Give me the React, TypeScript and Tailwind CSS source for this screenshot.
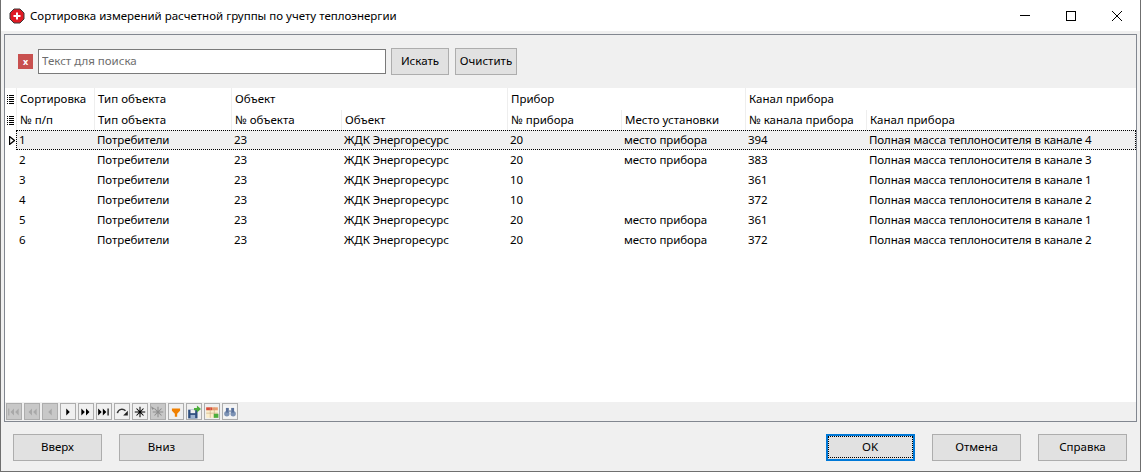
import React from "react";

const cols = [78, 137, 110, 166, 114, 124, 121, 259];
const rows = [
  ["1", "Потребители", "23", "ЖДК Энергоресурс", "20", "место прибора", "394", "Полная масса теплоносителя в канале 4"],
  ["2", "Потребители", "23", "ЖДК Энергоресурс", "20", "место прибора", "383", "Полная масса теплоносителя в канале 3"],
  ["3", "Потребители", "23", "ЖДК Энергоресурс", "10", "", "361", "Полная масса теплоносителя в канале 1"],
  ["4", "Потребители", "23", "ЖДК Энергоресурс", "10", "", "372", "Полная масса теплоносителя в канале 2"],
  ["5", "Потребители", "23", "ЖДК Энергоресурс", "20", "место прибора", "361", "Полная масса теплоносителя в канале 1"],
  ["6", "Потребители", "23", "ЖДК Энергоресурс", "20", "место прибора", "372", "Полная масса теплоносителя в канале 2"],
];
const sub = ["№ п/п", "Тип объекта", "№ объекта", "Объект", "№ прибора", "Место установки", "№ канала прибора", "Канал прибора"];
const groups: [string, number][] = [
  ["Сортировка", 78],
  ["Тип объекта", 137],
  ["Объект", 276],
  ["Прибор", 238],
  ["Канал прибора", 380],
];

function ListIcon() {
  return (
    <svg width="7" height="9" viewBox="0 0 7 9" className="block">
      {[0, 2, 4, 6, 8].map((y) => (
        <g key={y}>
          <rect x="0" y={y} width="1" height="1" fill="#000" />
          <rect x="2" y={y} width="5" height="1" fill="#000" />
        </g>
      ))}
    </svg>
  );
}

function Btn({ children, w, primary }: { children: React.ReactNode; w: string; primary?: boolean }) {
  return (
    <div
      className={`flex h-[27px] items-center justify-center bg-[#e1e1e1] pb-[1px] text-[11.5px] text-black ${w} ${
        primary ? "border-2 border-[#0078d7]" : "border border-[#adadad]"
      }`}
    >
      {primary ? (
        <div className="flex h-full w-full items-center justify-center border border-dotted border-black pr-[1px]">{children}</div>
      ) : (
        children
      )}
    </div>
  );
}

function Nav({ off, children }: { off?: boolean; children: React.ReactNode }) {
  return (
    <div
      className={`flex h-[17px] w-[16px] items-center justify-center border border-[#adadad] ${
        off ? "bg-[#c8c8c8]" : "bg-[#f0f0f0]"
      }`}
    >
      <svg width="14" height="14" viewBox="0 0 12 12" className="block">
        {children}
      </svg>
    </div>
  );
}

function navPaths(c: string) {
  return {
    first: (
      <>
        <rect x="1" y="3" width="1" height="6" fill={c} />
        <path d="M6 3v6L3 6zM10 3v6L7 6z" fill={c} />
      </>
    ),
    prevPage: <path d="M6 3v6L3 6zM10 3v6L7 6z" fill={c} />,
    prev: <path d="M7.5 3v6l-3-3z" fill={c} />,
    next: <path d="M4.5 3v6l3-3z" fill={c} />,
    nextPage: <path d="M2 3v6l3-3zM6 3v6l3-3z" fill={c} />,
    last: (
      <>
        <path d="M1 3v6l3-3zM5 3v6l3-3z" fill={c} />
        <rect x="9" y="3" width="1" height="6" fill={c} />
      </>
    ),
  };
}

function Star({ c }: { c: string }) {
  return (
    <path
      d="M6 1.500v9M1.500 6h9M3 3l6 6M9 3L3 9"
      stroke={c}
      strokeWidth="0.9"
      fill="none"
    />
  );
}

export default function App() {
  const a = navPaths("#000");
  const d = navPaths("#a8a8a8");
  return (
    <div
      className="flex h-[472px] w-[1141px] flex-col overflow-hidden border-r border-b border-l border-[#6f6f6f] bg-[#f0f0f0] text-[11.5px] leading-none text-black"
      style={{ fontFamily: '"Noto Sans", "Liberation Sans", sans-serif' }}
    >
      <div className="flex h-[31px] shrink-0 items-center bg-white pl-[8px]">
        <svg width="16" height="16" viewBox="0 0 16 16" className="mr-[5px] shrink-0">
          <path d="M5 1h6l4 4v6l-4 4H5l-4-4V5z" fill="#e01b24" stroke="#3a3a3a" />
          <path d="M7 4.500h2V7h2.500v2H9v2.500H7V9H4.500V7H7z" fill="#fff" />
        </svg>
        <span className="flex-1">Сортировка измерений расчетной группы по учету теплоэнергии</span>
        <div className="flex items-center">
          <div className="flex w-[46px] justify-center">
            <div className="h-px w-[10px] bg-black" />
          </div>
          <div className="flex w-[46px] justify-center">
            <div className="h-[10px] w-[10px] border border-black" />
          </div>
          <div className="flex w-[46px] justify-center">
            <svg width="10" height="10" viewBox="0 0 10 10" className="block">
              <path d="M0 0l10 10M10 0L0 10" stroke="#000" strokeWidth="1" fill="none" />
            </svg>
          </div>
        </div>
      </div>

      <div className="flex flex-1 flex-col px-[3px] pt-[3px]">
        <div className="flex h-[388px] w-[1133px] shrink-0 flex-col border border-[#828790] bg-white">
          <div className="flex h-[53px] shrink-0 items-center bg-[#f0f0f0] pl-[13px]">
            <div className="flex h-[15px] w-[15px] items-center justify-center bg-[#c8504f] text-[9px] font-bold text-white">
              x
            </div>
            <input
              readOnly
              placeholder="Текст для поиска"
              className="ml-[5px] h-[25px] w-[348px] border border-[#7a7a7a] bg-white px-[3px] pb-[2px] text-[11.5px] outline-none placeholder:text-[#6d6d6d]"
            />
            <div className="ml-[5px]">
              <Btn w="w-[58px]">Искать</Btn>
            </div>
            <div className="ml-[6px]">
              <Btn w="w-[62px]">Очистить</Btn>
            </div>
          </div>

          <div className="flex flex-1 flex-col overflow-hidden bg-white">
            <div className="flex h-[22px] shrink-0">
              <div className="flex w-[11px] shrink-0 items-center justify-center">
                <ListIcon />
              </div>
              {groups.map(([t, w]) => (
                <div
                  key={t}
                  style={{ width: w }}
                  className="flex shrink-0 items-center border-l border-[#eeeeee] pl-[3px]"
                >
                  {t}
                </div>
              ))}
            </div>
            <div className="flex h-[20px] shrink-0">
              <div className="flex w-[11px] shrink-0 items-center justify-center">
                <ListIcon />
              </div>
              {sub.map((t, i) => (
                <div
                  key={t}
                  style={{ width: cols[i] }}
                  className="flex shrink-0 items-center border-l border-[#eeeeee] pl-[3px]"
                >
                  {t}
                </div>
              ))}
            </div>
            {rows.map((r, ri) => (
              <div key={ri} className="flex h-[20px] shrink-0">
                <div className="flex w-[11px] shrink-0 items-center justify-end pr-[1px]">
                  {ri === 0 && (
                    <svg width="6" height="9" viewBox="0 0 6 9" className="block">
                      <path d="M.5.500v8l5-4z" fill="#fff" stroke="#000" strokeWidth="1.300" />
                    </svg>
                  )}
                </div>
                <div
                  className={`flex flex-1 ${
                    ri === 0 ? "border border-dotted border-black bg-[#f0f0f0]" : "border border-transparent"
                  }`}
                >
                  {r.map((c, i) => (
                    <div
                      key={i}
                      style={{ width: cols[i] }}
                      className="flex shrink-0 items-center whitespace-nowrap pl-[2px] tracking-[-0.007em]"
                    >
                      {c}
                    </div>
                  ))}
                </div>
              </div>
            ))}
          </div>

          <div className="flex h-[19px] shrink-0 items-center gap-[2px] bg-[#f0f0f0] pl-[1px]">
            <Nav off>{d.first}</Nav>
            <Nav off>{d.prevPage}</Nav>
            <Nav off>{d.prev}</Nav>
            <Nav>{a.next}</Nav>
            <Nav>{a.nextPage}</Nav>
            <Nav>{a.last}</Nav>
            <Nav>
              <path d="M2 7c1-4 5-4 7-2" stroke="#333" strokeWidth="1.300" fill="none" />
              <path d="M7 9h4V5z" fill="#222" />
            </Nav>
            <Nav>
              <Star c="#000" />
            </Nav>
            <Nav off>
              <path d="M0 1l3 2-2 1z" fill="#8d8d8d" />
              <Star c="#8d8d8d" />
            </Nav>
            <Nav>
              <path d="M2.500 3h7v2L7 7.500V10H5V7.500L2.500 5z" fill="#f08000" />
            </Nav>
            <Nav>
              <rect x="1" y="4" width="8" height="7.500" fill="#2f4f7f" />
              <rect x="3" y="4" width="4" height="3" fill="#f0f0f0" />
              <rect x="3" y="8.500" width="4" height="3" fill="#9fb4d0" />
              <path d="M6 2.500h2.500V0.500L12 3.500 8.500 6.500V4.500H6z" fill="#4cae3c" />
            </Nav>
            <Nav>
              <rect x="1" y="2" width="10" height="9" fill="#fbeecb" />
              <rect x="1" y="2" width="5" height="2.500" fill="#d84a3a" />
              <rect x="6" y="2" width="5" height="2.500" fill="#e89a70" />
              <path d="M1 7h10M4.500 2v9M8 2v9" stroke="#c8a880" strokeWidth=".5" />
              <rect x="7.500" y="7.500" width="4" height="3.500" fill="#4cae3c" />
            </Nav>
            <Nav>
              <rect x="0.500" y="1" width="11" height="10" fill="#f6f6f6" />
              <circle cx="3.300" cy="7.500" r="2.300" fill="#7d93b5" />
              <circle cx="8.700" cy="7.500" r="2.300" fill="#7d93b5" />
              <rect x="2.500" y="2.500" width="2.500" height="4" fill="#59719b" />
              <rect x="7" y="2.500" width="2.500" height="4" fill="#59719b" />
              <rect x="5" y="4.500" width="2" height="1.500" fill="#9aa8c0" />
            </Nav>
          </div>
        </div>

        <div className="flex flex-1 items-start justify-between pt-[12px] pr-[10px] pl-[9px]">
          <div className="flex gap-[17px]">
            <Btn w="w-[89px]">Вверх</Btn>
            <Btn w="w-[85px]">Вниз</Btn>
          </div>
          <div className="flex gap-[17px]">
            <Btn w="w-[89px]" primary>
              OK
            </Btn>
            <Btn w="w-[89px]">Отмена</Btn>
            <Btn w="w-[89px]">Справка</Btn>
          </div>
        </div>
      </div>
    </div>
  );
}
